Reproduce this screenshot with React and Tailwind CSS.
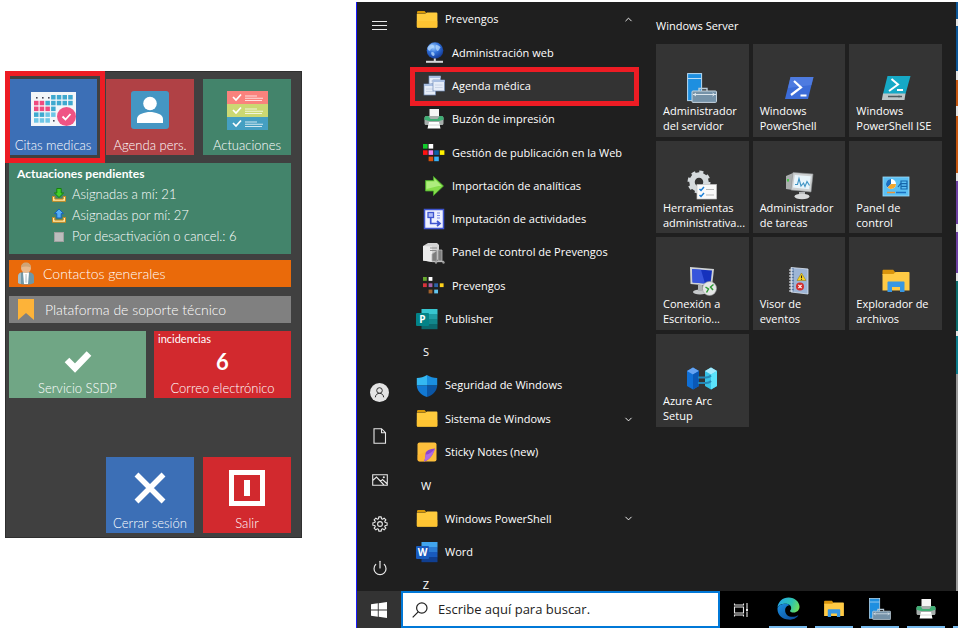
import { useState } from 'react';
import { ChevronDown, ChevronUp, Power } from 'lucide-react';
import { clsx } from 'clsx';

/* ---------- Prevengos panel icons ---------- */

const CalendarIcon = () => {
    const cells = [
        ['', '', '', 'b', 'b', 'b', 'b'],
        ['p', 'p', 'b', 'b', 'b', 'b', 'b'],
        ['p', 'p', 'p', 'b', '', '', ''],
        ['b', 'b', 'c', 'c', '', '', ''],
        ['c', 'c', 'c', '', '', '', '']
    ];
    const fills = { b: '#3fa9cf', p: '#ef4b7f', c: '#6ec6e6' };
    return (
        <svg width="46" height="36" viewBox="0 0 46 36">
            <rect x="1" y="0" width="45" height="34" fill="#f3f6f9" />
            {[6, 12, 18].map((x) => <rect key={x} x={x} y="5" width="1.6" height="1.6" fill="#445" />)}
            <rect x="23" y="28" width="1.6" height="1.6" fill="#445" />
            {cells.map((row, r) =>
                row.map((cell, c) =>
                    cell ? <rect key={`${r}-${c}`} x={4 + c * 5.7} y={3 + r * 5.8} width="4.5" height="4.5" fill={fills[cell]} /> : null
                )
            )}
            <circle cx="36.5" cy="24.5" r="9.5" fill="#ef5384" />
            <path d="M32.5 24.5l3 3 5-5.5" fill="none" stroke="#fff" strokeWidth="1.8" />
        </svg>
    );
};

const PersonIcon = () => (
    <svg width="40" height="40" viewBox="0 0 40 40">
        <rect x="1" y="1" width="38" height="38" rx="3" fill="#4596c3" />
        <circle cx="20" cy="13.5" r="6.8" fill="#fff" />
        <path d="M7 33v-4c0-5 8-7 13-7s13 2 13 7v4z" fill="#fff" />
    </svg>
);

const ChecklistIcon = () => (
    <svg width="41" height="39" viewBox="0 0 41 39">
        {['#fa827d', '#cbd873', '#459fc2'].map((fill, i) => (
            <g key={fill} transform={`translate(0 ${i * 13})`}>
                <rect width="41" height="13" fill={fill} />
                <path d="M6 6l3 3 5-5.5" fill="none" stroke="#fff" strokeWidth="1.7" />
                <path d="M18 5h12M18 7.2h18M18 9.5h17" stroke="#fff" strokeOpacity="0.75" strokeWidth="1.1" />
            </g>
        ))}
    </svg>
);

const TrayIcon = ({ up }) => (
    <svg width="16" height="16" viewBox="0 0 16 16">
        <path d="M1.5 9.500v4.800h13V9.500h-2.300v2.600H3.800V9.500z" fill="#ffe7a6" stroke="#c98a1d" strokeWidth="1" />
        {up ? (
            <path d="M8 1l4.600 4.600h-2.400V10H5.800V5.600H3.400z" fill="#55aef7" stroke="#1763b9" strokeWidth="1" />
        ) : (
            <path d="M8 10.500L3.400 6h2.400V1.500h4.400V6h2.400z" fill="#43cf28" stroke="#16800f" strokeWidth="1" />
        )}
    </svg>
);

const ContactIcon = () => (
    <svg width="18" height="24" viewBox="0 0 18 24">
        <path d="M1 21v-6c0-4 3-5 8-5s8 1 8 5v6c-4 2-12 2-16 0z" fill="#6f97a6" />
        <path d="M1 21v-6c0-3 1-4 3-4.600V22c-1 0-2-.5-3-1z" fill="#a9bdc4" />
        <path d="M6 10.500h6L11 22H7z" fill="#fff" />
        <path d="M8.300 12h1.500l.5 8-1.200 1.500L8 20z" fill="#cfd8dc" />
        <circle cx="9" cy="6" r="5" fill="#e8b98d" />
        <path d="M4 5.500C4 2.500 6 .5 9 .5s5 2 5 5C11 4 7 4 4 5.500z" fill="#cfa477" />
    </svg>
);

const BookmarkIcon = () => (
    <svg width="16" height="21" viewBox="0 0 16 21">
        <path d="M0 0h16v21l-8-7-8 7z" fill="#fdb339" />
    </svg>
);

const CheckIcon = () => (
    <svg width="30" height="24" viewBox="0 0 30 24">
        <path d="M4 11l8 8L26 4.500" fill="none" stroke="#fff" strokeWidth="6.5" />
    </svg>
);

const CrossIcon = () => (
    <svg width="32" height="32" viewBox="0 0 32 32">
        <path d="M2.500 2.500l27 27M29.500 2.500l-27 27" stroke="#fff" strokeWidth="5.5" />
    </svg>
);

const ExitIcon = () => (
    <svg width="36" height="36" viewBox="0 0 36 36">
        <rect x="2.5" y="2.5" width="31" height="31" fill="none" stroke="#fff" strokeWidth="5" />
        <rect x="15" y="10" width="6" height="16" fill="#fff" />
    </svg>
);

/* ---------- Start menu icons ---------- */

const FolderIcon = () => (
    <svg width="22" height="22" viewBox="0 0 22 22">
        <path d="M1 3.500c0-1 .4-1.500 1.400-1.500h6.200l2 2.500H1z" fill="#d99a08" />
        <path d="M.8 4.800h8.400L11 3.600h9.500c.5 0 .9.400.9.900v13c0 .8-.5 1.300-1.300 1.300h-18c-.8 0-1.300-.5-1.300-1.300z" fill="#ffcb3d" />
        <path d="M.8 12h20.600v5.500c0 .8-.5 1.300-1.300 1.300h-18c-.8 0-1.300-.5-1.300-1.300z" fill="#fdc02c" opacity=".6" />
    </svg>
);

const GlobeIcon = () => (
    <svg width="22" height="22" viewBox="0 0 22 22">
        <defs>
            <radialGradient id="globe" cx=".4" cy=".3" r=".8">
                <stop offset="0" stopColor="#9fd0ff" />
                <stop offset=".45" stopColor="#2f6fd8" />
                <stop offset="1" stopColor="#0b2c84" />
            </radialGradient>
        </defs>
        <circle cx="12" cy="8.5" r="8.3" fill="url(#globe)" />
        <path d="M7 3c2-1 4 0 4 1.500S8 6 7.500 8 5 8 4.500 7 5 4 7 3zM13 3c2 0 4 1 4.600 2.600-1 .6-1.600 3.400-3 3.400S12 4 13 3zM9 10c2 0 3 1.500 2.500 3S9 14 8.500 12.500 8 10 9 10z" fill="#b9dcff" opacity=".75" />
        <rect x="10.8" y="16.5" width="2" height="3" fill="#d5d8da" />
        <rect x="3" y="18.8" width="17" height="2" fill="#d5d8da" />
    </svg>
);

const WindowsStackIcon = () => (
    <svg width="22" height="22" viewBox="0 0 22 22">
        {[[6, 1], [1, 9], [10, 5]].map(([x, y]) => (
            <g key={x}>
                <rect x={x} y={y} width="11.5" height="11" fill="#e6edf8" stroke="#6f8cb8" strokeWidth=".7" />
                <rect x={x} y={y} width="11.5" height="2" fill="#a9bfe2" />
                <path d={`M${x + 2} ${y + 5}h7.500M${x + 2} ${y + 7.5}h7.500`} stroke="#c3cee2" strokeWidth=".8" />
            </g>
        ))}
    </svg>
);

const PrinterIcon = () => (
    <svg width="22" height="22" viewBox="0 0 22 22">
        <rect x="6.5" y="1" width="9.5" height="8" fill="#f5f5f5" />
        <path d="M1.500 10c0-1.200 1-2 2-2h15c1 0 2 .8 2 2v5.500c0 .8-.6 1.500-1.500 1.500H3c-.9 0-1.500-.7-1.500-1.500z" fill="#a6adab" />
        <path d="M1.500 10c0-1.200 1-2 2-2h2l2 3h7l2-3h2c1 0 2 .8 2 2v1.800L16 13H6l-4.500-1.200z" fill="#3fae74" />
        <path d="M6 14h10l1.500 6.500h-13z" fill="#fff" />
        <path d="M6 17h10" stroke="#c9cdcc" strokeWidth=".8" />
    </svg>
);

const PixelsIcon = ({ colors, size }) => {
    const spots = [[0, 2], [5.6, 2], [0, 8.3], [5.6, 8.3], [11.2, 8.3], [16.8, 8.3], [5.6, 14.6], [11.2, 14.6]];
    return (
        <svg width="22" height="22" viewBox="0 0 22 22">
            {spots.map(([x, y], i) => <rect key={i} x={x} y={y} width={size} height={size} fill={colors[i]} />)}
        </svg>
    );
};

const GreenArrowIcon = () => (
    <svg width="22" height="22" viewBox="0 0 22 22">
        <path d="M2.500 5.500h8V1.500L20.500 11l-10 9.500v-4.500h-8z" fill="#86dd4b" stroke="#47a82a" strokeWidth=".8" />
        <path d="M3.500 6.500h8V4l7 7-3 0-12 3z" fill="#b8f18b" opacity=".8" />
    </svg>
);

const FlowIcon = () => (
    <svg width="22" height="22" viewBox="0 0 22 22">
        <rect x="1.5" y="1.5" width="19" height="19" fill="#eef1ff" stroke="#3f55cf" strokeWidth="1.5" />
        <rect x="5" y="4.5" width="5.5" height="5" fill="#aebcf7" stroke="#3f55cf" strokeWidth="1.3" />
        <path d="M7.700 10v5.500H16M14 13l3 2.500-3 2.500" fill="none" stroke="#3f55cf" strokeWidth="1.7" />
        <path d="M14 5h3M14 7.500h3M14 10h3" stroke="#7f90e8" strokeWidth="1.1" />
    </svg>
);

const ServerBoxIcon = () => (
    <svg width="24" height="22" viewBox="0 0 24 22">
        <path d="M0 4l5-3h9l2 2v14l-6 3-10-1.500z" fill="#d3d3d3" />
        <path d="M0 4l9 .6V20l-9-1.500z" fill="#ececec" />
        <path d="M7 6h7M7 8.500h7" stroke="#8c8c8c" strokeWidth="1.2" />
        <path d="M9 12l5-3.500v11h-5zM15 8h4v11h-4z" fill="#7d7d7d" stroke="#b5b5b5" strokeWidth=".8" />
        <path d="M9 19.500h12" stroke="#bcbcbc" strokeWidth="1.3" />
        <circle cx="13" cy="20.500" r="1.2" fill="#999" />
        <circle cx="20.5" cy="20.500" r="1.2" fill="#999" />
    </svg>
);

// Publisher and Word share the same shape: a badge over a striped sheet
const OfficeIcon = ({ letter, badge, stripes }) => (
    <span className="relative block h-[22px] w-[22px]">
        <svg width="22" height="22" viewBox="0 0 22 22">
            {stripes.map((fill, i) => (
                <rect key={i} x="5.5" y={1 + i * 5} width="16" height="5.2" fill={fill} />
            ))}
            <rect x="0" y="5" width="13" height="13" rx="1" fill={badge} />
        </svg>
        <span className="absolute top-[5px] left-0 w-[13px] text-center text-[10px] leading-[13px] font-bold">{letter}</span>
    </span>
);

const ShieldIcon = () => (
    <svg width="22" height="22" viewBox="0 0 22 22">
        <path d="M11 0C8 2 4.500 3 .8 3v7.500H11z" fill="#34b8f2" />
        <path d="M11 0c3 2 6.500 3 10.200 3v7.500H11z" fill="#1a8fe0" />
        <path d="M.8 10.500C1 16 5 20 11 22V10.500z" fill="#1279d3" />
        <path d="M21.200 10.500C21 16 17 20 11 22V10.500z" fill="#0b56a5" />
    </svg>
);

const StickyIcon = () => (
    <svg width="22" height="22" viewBox="0 0 22 22">
        <rect x="1.5" y="1.5" width="19" height="19" rx="2" fill="#fdbf3c" />
        <path d="M20 7L8.500 20.500H3.500c-1 0-2-1-2-2V14z" fill="#ffb02c" opacity=".5" />
        <path d="M19 7.500c-5 .5-9 2-9.500 5 0 3-.5 6-1.500 8 5-1 9-6 11-13z" fill="#8e46cf" />
        <path d="M9.500 13.500c2 .5 6-1.500 9.500-6-2 6-5 11-11 13 1-2 1.500-5 1.500-7z" fill="#b06be6" />
    </svg>
);

const UserIcon = () => (
    <svg width="19" height="19" viewBox="0 0 19 19">
        <circle cx="9.5" cy="9.5" r="9.5" fill="#e4e4e4" />
        <circle cx="9.5" cy="7.5" r="2.8" fill="none" stroke="#333" strokeWidth="1" />
        <path d="M5.300 14.300c.3-2.600 2-4 4.200-4s3.900 1.400 4.200 4" fill="none" stroke="#333" strokeWidth="1" />
    </svg>
);

const DocumentIcon = () => (
    <svg width="16" height="16" viewBox="0 0 16 16" fill="none" stroke="#e8e8e8" strokeWidth="1.1">
        <path d="M2 .7h7.500l4 4v10.500H2zM9.500.7v4h4" />
    </svg>
);

const PicturesIcon = () => (
    <svg width="16" height="16" viewBox="0 0 16 16" fill="none" stroke="#e8e8e8" strokeWidth="1.1">
        <path d="M.7 2.700h14.600v10.600H.7zM.7 8.500l3.800-3.500 7.500 8M8.500 9.300l2-1.800 4.800 4.500" />
        <circle cx="11.8" cy="5.2" r=".5" />
    </svg>
);

const GearIcon = () => {
    const points = [];
    for (let i = 0; i < 8; i++) {
        [[-16, 5.4], [-10, 7.2], [10, 7.2], [16, 5.4]].forEach(([offset, radius]) => {
            const angle = ((i * 45 + offset) * Math.PI) / 180;
            points.push(`${8 + radius * Math.cos(angle)},${8 + radius * Math.sin(angle)}`);
        });
    }
    return (
        <svg width="16" height="16" viewBox="0 0 16 16" fill="none" stroke="#e8e8e8" strokeWidth="1.1" strokeLinejoin="round">
            <circle cx="8" cy="8" r="2.4" />
            <polygon points={points.join(' ')} />
        </svg>
    );
};

/* ---------- Live tile icons ---------- */

const ServerManagerIcon = ({ className }) => (
    <svg viewBox="0 0 30 30" className={className}>
        <rect x=".6" y=".6" width="14" height="27" fill="#1e8fe0" stroke="#b9dcf5" strokeWidth="1" />
        <path d="M1 5.500h13.500" stroke="#b9dcf5" strokeWidth="1" />
        <path d="M12 18v-2.500h8V18" fill="none" stroke="#b9cbd8" strokeWidth="1.4" />
        <rect x="5" y="18" width="24.5" height="11.4" rx="1" fill="#7592a8" stroke="#c6d4de" strokeWidth="1" />
        <path d="M6 21.500h23M9 20l-2 1.500L9 23M25.500 20l2 1.500-2 1.500" fill="none" stroke="#dbe5ec" strokeWidth="1" />
    </svg>
);

const PowerShellIcon = () => (
    <svg width="30" height="30" viewBox="0 0 30 30">
        <path d="M6.500 4h23L24 26H1z" fill="#3c6cd8" />
        <path d="M6.500 4h23l-2 8L4 15z" fill="#5a86e6" opacity=".6" />
        <path d="M10 8l7 6.500-10 7.500M16.500 22.500h6" fill="none" stroke="#fff" strokeWidth="2.2" />
    </svg>
);

const PowerShellIseIcon = () => (
    <svg width="30" height="30" viewBox="0 0 30 30">
        <path d="M6.500 3h23l-5 18H2z" fill="#16a9c6" />
        <path d="M10.500 6l6.500 5.500L8 18M16 17h6" fill="none" stroke="#fff" strokeWidth="2" />
        <path d="M2 20.500h22.500l-1 6.500H.8z" fill="#bcc6c8" />
        <path d="M7 23.500h14M18 22.500v2" stroke="#4c5a5e" strokeWidth="1.3" />
    </svg>
);

const AdminToolsIcon = () => (
    <svg width="30" height="30" viewBox="0 0 30 30">
        <circle cx="12" cy="12" r="7" fill="none" stroke="#d5dadd" strokeWidth="5.5" />
        <circle cx="12" cy="12" r="10" fill="none" stroke="#d5dadd" strokeWidth="3" strokeDasharray="4 3.850" />
        <rect x="10" y="14.5" width="19.5" height="14.5" fill="#fafafa" stroke="#c4c4c4" strokeWidth=".7" />
        <path d="M12.500 19l1.500 1.500 3-3.500M12.500 25l1.500 1.500 3-3.500" fill="none" stroke="#1d7fd6" strokeWidth="1.5" />
        <path d="M19 19.500h8M19 25h8" stroke="#b9b9b9" strokeWidth="1" />
    </svg>
);

const TaskManagerIcon = () => (
    <svg width="30" height="30" viewBox="0 0 30 30">
        <path d="M2 6l7-3v17l-7-1z" fill="#a9adad" />
        <rect x="3" y="9" width="2" height="2.5" fill="#49c24a" />
        <path d="M9 2.500l20 1.500-2 18-20-2z" fill="#cdd0d1" stroke="#8b8f90" strokeWidth=".6" />
        <path d="M10.800 5l16 1.300-1.600 13L9 17.500z" fill="#e9f5fb" />
        <path d="M11 14.500h2.500l1.500-6 2 7.500 2.500-3 1.500 3.500 2-5 2.500 4" fill="none" stroke="#3f94c4" strokeWidth="1.1" />
        <path d="M15 22h6v4h-6z" fill="#b5b8b9" />
        <ellipse cx="18" cy="26.5" rx="7.5" ry="2.7" fill="#d8dadb" />
    </svg>
);

const ControlPanelIcon = () => (
    <svg width="30" height="30" viewBox="0 0 30 30">
        <rect x="2" y="7" width="26" height="19" fill="#5bc0f4" stroke="#9fdcfb" strokeWidth=".8" />
        <circle cx="10" cy="14" r="5" fill="#fff" />
        <path d="M10 14V9a5 5 0 00-3.500 8.500z" fill="#1a6fc0" />
        <path d="M10 14h5a5 5 0 01-8.500 3.500z" fill="#f2a72e" />
        <path d="M17 17l3-4M20 11h6v8h-6zM20 13.700h6M20 16.300h6" fill="none" stroke="#1666ab" strokeWidth="1.2" />
        <path d="M6 22.500h8" stroke="#e9953a" strokeWidth="1.5" />
        <path d="M15 22.500h10" stroke="#1a6fc0" strokeWidth="1.5" />
    </svg>
);

const RemoteDesktopIcon = () => (
    <svg width="30" height="30" viewBox="0 0 30 30">
        <path d="M3 1l24 2-2 17-21.500-2z" fill="#cfd3d6" />
        <path d="M5 3l20 1.500L23.500 18 5.500 16.500z" fill="#1532bd" />
        <path d="M5 3l9 .7L18 17.500l-12.500-1z" fill="#4664e8" opacity=".7" />
        <ellipse cx="13" cy="26" rx="7" ry="2.6" fill="#c6c9cb" />
        <rect x="11" y="19" width="4.5" height="6" fill="#aeb2b4" />
        <circle cx="22.5" cy="22.5" r="7" fill="#e4e6e6" stroke="#9a9d9e" strokeWidth=".6" />
        <path d="M18.500 21l3 2-2 3.500M26.500 18.500l-3 2.500 2.500 3" fill="none" stroke="#2f9a35" strokeWidth="1.5" />
    </svg>
);

const EventViewerIcon = () => (
    <svg width="30" height="30" viewBox="0 0 30 30">
        <path d="M7 1.500l17 1.500v25L7 26z" fill="#9db5d6" stroke="#dce6f2" strokeWidth=".8" />
        <path d="M10 2.500l-2 0v23l2 .3z" fill="#5c7ba6" />
        {[4, 7, 10, 13, 16, 19, 22, 25].map((y) => <path key={y} d={`M5 ${y}h4.500`} stroke="#e3e8ef" strokeWidth="1.1" />)}
        <path d="M17.500 7l4.500 7.500h-9z" fill="#f9d423" stroke="#8b7207" strokeWidth=".5" />
        <path d="M17.500 9.500v2.500M17.500 12.800v1" stroke="#222" strokeWidth="1.1" />
        <circle cx="16" cy="20.5" r="4" fill="#d22e2e" />
        <path d="M14.400 18.900l3.200 3.200M17.600 18.900l-3.200 3.200" stroke="#fff" strokeWidth="1.2" />
    </svg>
);

const ExplorerIcon = ({ className }) => (
    <svg viewBox="0 0 30 30" className={className}>
        <path d="M1.500 5c0-.8.4-1.300 1.200-1.300h9.500L14 6v3H1.500z" fill="#d9940c" />
        <path d="M1.500 8h11l2-2h13c.6 0 1 .4 1 1v17.500h-27z" fill="#ffca45" />
        <path d="M6.500 26v-9.500c0-.6.400-1 1-1h15c.6 0 1 .4 1 1V26h-4.500v-5h-8v5z" fill="#3897e3" />
    </svg>
);

const AzureArcIcon = () => (
    <svg width="32" height="30" viewBox="0 0 32 30">
        <path d="M1 8l6-3.500L13 8v15l-6 3.500L1 23z" fill="#0f6fd6" />
        <path d="M1 8l6-3.500L13 8l-6 3.500z" fill="#65a3f2" />
        <path d="M7 11.500L13 8v15l-6 3.500z" fill="#0a58b6" />
        <path d="M19 8l6-3.500L31 8v15l-6 3.500L19 23z" fill="#37c2e6" />
        <path d="M19 8l6-3.500L31 8l-6 3.500z" fill="#a5eafc" />
        <path d="M25 11.500L31 8v15l-6 3.500z" fill="#5be3fb" />
        <path d="M12 14.500h8c3 0 4-1 5-2M12 20h8c3 0 4-1 5-2" fill="none" stroke="#2587b5" strokeWidth="2" />
    </svg>
);

const EdgeIcon = () => (
    <svg width="23" height="23" viewBox="0 0 24 24">
        <defs>
            <linearGradient id="edgeTop" x1="0" y1=".3" x2="1" y2=".6">
                <stop offset="0" stopColor="#27a8e8" />
                <stop offset=".6" stopColor="#2ec4b0" />
                <stop offset="1" stopColor="#6fe05a" />
            </linearGradient>
            <linearGradient id="edgeLow" x1="0" y1="0" x2="1" y2="1">
                <stop offset="0" stopColor="#1b8fe0" />
                <stop offset="1" stopColor="#0b4795" />
            </linearGradient>
        </defs>
        <path d="M.5 11C1.200 4.600 6 .5 12 .5c7 0 11.500 4.800 11.500 9.800 0 3.600-2.700 6-6 6-2.600 0-3.900-.9-3.900-1.700 0-.7 1.200-1.100 1.200-3.100 0-2.600-2.500-4.500-5.800-4.500C5 7 1.500 8.500.5 11z" fill="url(#edgeTop)" />
        <path d="M.5 12C1 8.500 5 7 9 7c2 0 3.500.7 4.500 1.700-3 0-5 2.300-5 5.300 0 4 3.500 6.700 7.500 6.700 2.500 0 4.300-.7 5.500-1.400.5-.2.800.2.500.6A11.600 11.600 0 0112 23.500C5.500 23.500.2 18.500.5 12z" fill="url(#edgeLow)" />
    </svg>
);

const TaskViewIcon = () => (
    <svg width="16" height="16" viewBox="0 0 16 16" fill="none" stroke="#e8e8e8" strokeWidth="1.1">
        <path d="M1.500 5h9v6h-9zM1.500 1.500V3h9V1.500M1.500 14.500V13h9v1.500M14 1v5M14 9.500V15" />
        <rect x="13" y="6.5" width="2" height="2.5" fill="#e8e8e8" stroke="none" />
    </svg>
);

const StartIcon = () => (
    <svg width="16" height="16" viewBox="0 0 16 16" fill="#fff">
        <path d="M0 2.300l6.800-1v6.300H0zM7.700 1.200L16 0v7.600H7.700zM0 8.400h6.800v6.300l-6.800-1zM7.700 8.400H16V16l-8.300-1.200z" />
    </svg>
);

const SearchIcon = () => (
    <svg width="16" height="16" viewBox="0 0 16 16" fill="none" stroke="#222" strokeWidth="1.2">
        <circle cx="9.8" cy="6" r="5.2" />
        <path d="M6.200 9.800L.7 15.300" />
    </svg>
);

/* ---------- Data ---------- */

const appList = [
    { name: 'Prevengos', icon: <FolderIcon />, arrow: 'up' },
    { name: 'Administración web', icon: <GlobeIcon />, sub: true },
    { name: 'Agenda médica', icon: <WindowsStackIcon />, sub: true, active: true },
    { name: 'Buzón de impresión', icon: <PrinterIcon />, sub: true },
    {
        name: 'Gestión de publicación en la Web',
        icon: <PixelsIcon size={4.6} colors={['#11c92b', '#fff', '#f11', '#f285f0', '#0c5fa8', '#fff200', '#d9510b', '#38b1f5']} />,
        sub: true
    },
    { name: 'Importación de analíticas', icon: <GreenArrowIcon />, sub: true },
    { name: 'Imputación de actividades', icon: <FlowIcon />, sub: true },
    { name: 'Panel de control de Prevengos', icon: <ServerBoxIcon />, sub: true },
    {
        name: 'Prevengos',
        icon: <PixelsIcon size={3.8} colors={['#67a92f', '#fff', '#d8333b', '#a662a9', '#2d62a8', '#ffd21a', '#a3622c', '#63c5ee']} />,
        sub: true
    },
    { name: 'Publisher', icon: <OfficeIcon letter="P" badge="#038387" stripes={['#37c6d0', '#1f9da5', '#12878c', '#0b6a6f']} /> },
    { letter: 'S' },
    { name: 'Seguridad de Windows', icon: <ShieldIcon /> },
    { name: 'Sistema de Windows', icon: <FolderIcon />, arrow: 'down' },
    { name: 'Sticky Notes (new)', icon: <StickyIcon /> },
    { letter: 'W' },
    { name: 'Windows PowerShell', icon: <FolderIcon />, arrow: 'down' },
    { name: 'Word', icon: <OfficeIcon letter="W" badge="#185abd" stripes={['#41a5ee', '#2b7cd3', '#185abd', '#103f91']} /> },
    { letter: 'Z' }
];

const tiles = [
    { lines: ['Administrador', 'del servidor'], icon: <ServerManagerIcon className="h-[30px] w-[30px]" /> },
    { lines: ['Windows', 'PowerShell'], icon: <PowerShellIcon /> },
    { lines: ['Windows', 'PowerShell ISE'], icon: <PowerShellIseIcon /> },
    { lines: ['Herramientas', 'administrativa...'], icon: <AdminToolsIcon /> },
    { lines: ['Administrador', 'de tareas'], icon: <TaskManagerIcon /> },
    { lines: ['Panel de', 'control'], icon: <ControlPanelIcon /> },
    { lines: ['Conexión a', 'Escritorio...'], icon: <RemoteDesktopIcon /> },
    { lines: ['Visor de', 'eventos'], icon: <EventViewerIcon /> },
    { lines: ['Explorador de', 'archivos'], icon: <ExplorerIcon className="h-[30px] w-[30px]" /> },
    { lines: ['Azure Arc', 'Setup'], icon: <AzureArcIcon /> }
];

const taskbarApps = [
    { name: 'Microsoft Edge', icon: <EdgeIcon /> },
    { name: 'Explorador de archivos', icon: <ExplorerIcon className="h-[22px] w-[22px]" /> },
    { name: 'Administrador del servidor', icon: <ServerManagerIcon className="h-[22px] w-[22px]" /> },
    { name: 'Buzón de impresión', icon: <PrinterIcon /> }
];

// Sliver of the desktop that shows beside the menu: colour and share of the height
const desktopEdge = [
    ['#0b5596', 17], ['#e5e5e5', 7], ['#0b5596', 45], ['#e5e5e5', 9], ['#c4560f', 26], ['#e5e5e5', 10],
    ['#c4560f', 57], ['#e5e5e5', 8], ['#6b3fa0', 43], ['#e5e5e5', 8], ['#6b3fa0', 41], ['#e5e5e5', 8],
    ['#0b6b6b', 50], ['#e5e5e5', 5], ['#0b7b8b', 38], ['#9a9a9a', 217]
];

/* ---------- Panels ---------- */

const Tile = ({ label, icon, className, highlighted }) => (
    <button className={clsx('relative flex h-[76px] flex-col items-center pb-0.5 text-[13px] leading-4', className)}>
        <span className="flex flex-1 items-center pt-1">{icon}</span>
        <span className="whitespace-nowrap">{label}</span>
        {highlighted && <span className="absolute -top-2 -right-2 -bottom-2 -left-1 border-[5px] border-[#ed1c24]" />}
    </button>
);

const PrevengosPanel = () => (
    <section className="mt-[71px] w-[297px] shrink-0 self-start border border-[#2f2f2f] bg-[#404040] pt-[7px] pr-2.5 pb-1 pl-[3px] font-[Lato,sans-serif] font-light text-white">
        <div className="grid grid-cols-3 gap-[9px]">
            <Tile label="Citas medicas" icon={<CalendarIcon />} className="z-10 bg-[#3c6fb6]" highlighted />
            <Tile label="Agenda pers." icon={<PersonIcon />} className="bg-[#b04145]" />
            <Tile label="Actuaciones" icon={<ChecklistIcon />} className="bg-[#43846b]" />
        </div>

        <div className="mt-2 bg-[#43846b] pt-px pb-[7px] pl-2">
            <h2 className="text-[12px] leading-5 font-bold">Actuaciones pendientes</h2>
            <ul className="pl-[34px] text-[13px] leading-[21px]">
                <li className="flex items-center gap-[5px]"><TrayIcon />Asignadas a mí: 21</li>
                <li className="flex items-center gap-[5px]"><TrayIcon up />Asignadas por mí: 27</li>
                <li className="flex items-center gap-[5px]">
                    <span className="mx-[3px] h-2.5 w-2.5 border border-[#a0a0a0] bg-[#bdbdbd]" />
                    Por desactivación o cancel.: 6
                </li>
            </ul>
        </div>

        <button className="mt-1.5 flex h-[27px] w-full items-center gap-2 bg-[#ea6a0a] pl-2 text-[14px]">
            <ContactIcon />
            Contactos generales
        </button>
        <button className="mt-[9px] flex h-[27px] w-full items-center gap-[11px] bg-[#808080] pl-[9px] text-[14px]">
            <BookmarkIcon />
            Plataforma de soporte técnico
        </button>

        <div className="mt-2 grid grid-cols-2 gap-2 text-[13px] leading-4">
            <button className="flex h-[67px] flex-col items-center bg-[#70a685] pb-0.5">
                <span className="flex flex-1 items-center pt-2.5"><CheckIcon /></span>
                Servicio SSDP
            </button>
            <button className="flex h-[67px] flex-col items-center bg-[#d2292e] pb-0.5">
                <span className="self-start pl-1 text-[11px] font-normal">incidencias</span>
                <span className="flex-1 text-[22px] leading-[30px] font-bold">6</span>
                Correo electrónico
            </button>
        </div>

        <div className="mt-[59px] grid grid-cols-3 gap-[9px]">
            <Tile label="Cerrar sesión" icon={<CrossIcon />} className="col-start-2 bg-[#3c6fb6]" />
            <Tile label="Salir" icon={<ExitIcon />} className="bg-[#d2292e]" />
        </div>
    </section>
);

const Rail = () => (
    <nav className="flex w-[45px] shrink-0 flex-col justify-between pb-px">
        <button aria-label="Menú" className="flex h-[46px] flex-col items-center justify-center gap-[3px]">
            <span className="h-px w-[15px] bg-[#e8e8e8]" />
            <span className="h-px w-[15px] bg-[#e8e8e8]" />
            <span className="h-px w-[15px] bg-[#e8e8e8]" />
        </button>
        <div>
            {[
                { name: 'Cuenta', icon: <UserIcon /> },
                { name: 'Documentos', icon: <DocumentIcon /> },
                { name: 'Imágenes', icon: <PicturesIcon /> },
                { name: 'Configuración', icon: <GearIcon /> },
                { name: 'Inicio/Apagado', icon: <Power size={16} strokeWidth={1.8} color="#e8e8e8" /> }
            ].map((item) => (
                <button key={item.name} aria-label={item.name} className="flex h-11 w-full items-center justify-center">
                    {item.icon}
                </button>
            ))}
        </div>
    </nav>
);

const AppList = () => (
    <ul className="-mb-[11px] ml-2 flex w-[229px] shrink-0 flex-col pt-px">
        {appList.map((app, i) => (
            <li key={i} className="relative flex min-h-0 flex-1">
                <button
                    className={clsx(
                        'flex w-full items-center gap-[7px] pr-[5px] text-left whitespace-nowrap',
                        app.sub ? 'pl-[13px]' : 'pl-1.5',
                        app.active && 'bg-[#333]'
                    )}
                >
                    {app.letter ? (
                        <span className="w-5 text-center leading-[10px]">{app.letter}</span>
                    ) : (
                        <>
                            <span className="w-[22px] shrink-0">{app.icon}</span>
                            <span className="flex-1">{app.name}</span>
                        </>
                    )}
                    {app.arrow === 'up' && <ChevronUp size={11} strokeWidth={2} />}
                    {app.arrow === 'down' && <ChevronDown size={11} strokeWidth={2} />}
                </button>
                {app.active && <span className="absolute inset-x-0 -inset-y-[3px] border-[5px] border-[#ed1c24]" />}
            </li>
        ))}
    </ul>
);

const StartMenu = () => {
    const [query, setQuery] = useState('');

    return (
        <section className="flex min-w-0 flex-1 flex-col border-l border-[#1a1aff] font-['Open_Sans','Noto_Sans',sans-serif] text-[11px] text-white">
            <div className="flex min-h-0 flex-1 overflow-hidden bg-[#1f1f1f]">
                <Rail />
                <AppList />
                <div className="mr-3.5 ml-[17px] min-w-0 flex-1">
                    <h2 className="pt-3.5 pb-2 leading-5">Windows Server</h2>
                    <div className="grid grid-cols-3 gap-1">
                        {tiles.map((tile) => (
                            <button key={tile.lines.join(' ')} className="flex aspect-square flex-col bg-[#343434] pt-[29px] text-left leading-[15px]">
                                <span className="flex h-[30px] w-full shrink-0 justify-center">{tile.icon}</span>
                                <span className="pl-[7px] whitespace-nowrap">
                                    {tile.lines[0]}
                                    <br />
                                    {tile.lines[1]}
                                </span>
                            </button>
                        ))}
                    </div>
                </div>
                <div className="flex w-0.5 shrink-0 flex-col">
                    {desktopEdge.map(([color, share], i) => (
                        <span key={i} style={{ backgroundColor: color, flexGrow: share }} />
                    ))}
                </div>
            </div>

            <div className="flex h-[37px] shrink-0 bg-black">
                <button aria-label="Inicio" className="flex w-[44px] items-center justify-center bg-[#333]">
                    <StartIcon />
                </button>
                <label className="flex w-[319px] items-center gap-2.5 border-2 border-[#0078d7] bg-white pl-[9px]">
                    <SearchIcon />
                    <input
                        type="text"
                        aria-label="Buscar"
                        value={query}
                        onChange={(e) => setQuery(e.target.value)}
                        placeholder="Escribe aquí para buscar."
                        className="min-w-0 flex-1 text-[13px] text-black outline-none placeholder:text-[#222]"
                    />
                </label>
                <button aria-label="Vista de tareas" className="mr-[7px] flex w-[42px] items-center justify-center">
                    <TaskViewIcon />
                </button>
                <div className="flex min-w-0 flex-1 gap-2 overflow-hidden">
                    {taskbarApps.map((app) => (
                        <button key={app.name} aria-label={app.name} className="flex w-[38px] shrink-0 items-center justify-center border-b-2 border-[#76b9ed]">
                            {app.icon}
                        </button>
                    ))}
                    <span className="w-[38px] shrink-0 border-b-2 border-[#76b9ed]" />
                </div>
            </div>
        </section>
    );
};

export default function App() {
    return (
        <main className="flex h-screen min-h-[630px] gap-[54px] bg-white py-0.5 pr-0.5 pl-[5px]">
            <div className="-mt-0.5 flex">
                <PrevengosPanel />
            </div>
            <StartMenu />
        </main>
    );
}
